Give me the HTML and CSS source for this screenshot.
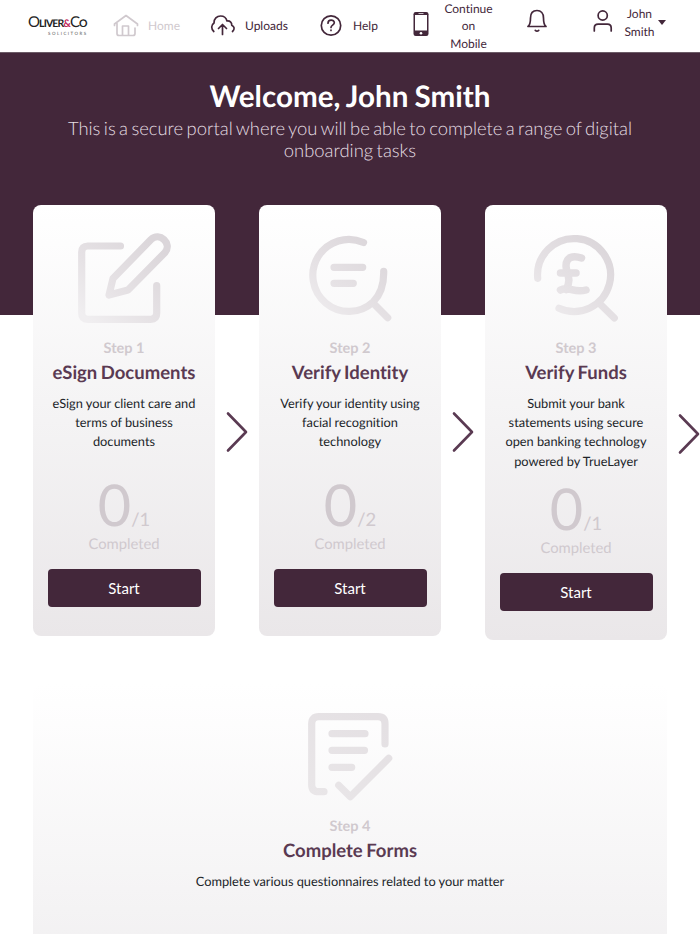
FILE: index.html
```html
<!DOCTYPE html>
<html lang="en">
<head>
    <meta charset="UTF-8">
    <meta name="viewport" content="width=device-width, initial-scale=1.0">
    <title>Oliver&amp;Co Solicitors</title>
    <link rel="stylesheet" href="styles.css">
</head>
<body>
    <nav class="navbar">
        <a class="logo">
            <span class="logo-name">O<small>LIVER</small><em>&amp;</em>C<small>O</small></span>
            <span class="logo-sub">SOLICITORS</span>
        </a>
        <a class="nav-item nav-home active">
            <svg width="26" height="24" viewBox="0 0 26 24"><path d="M1.500 11.500V10L13 1.500 24.500 10v1.500M4 9.500v10q0 2 2 2h3.500v-9.500h6v9.500M9.500 21.500H20q2 0 2-2V14"/></svg>
            <span>Home</span>
        </a>
        <a class="nav-item nav-uploads">
            <svg width="26" height="24" viewBox="0 0 26 24"><path d="M3.800 17.500C1 15 1 11 4 9 3.800 4.500 7 2 10.500 2c3.500 0 5.800 2 6.500 5 3.300-.3 5 1.700 4.700 4.200 2.800 1.300 3.300 4 .8 6.300M12.500 20.500V11M8.500 14.500l4-4 4 4"/></svg>
            <span>Uploads</span>
        </a>
        <a class="nav-item nav-help">
            <svg width="22" height="24" viewBox="0 0 22 24"><circle cx="11" cy="11.500" r="9.700"/><path d="M8 9.200c0-4.200 6.300-4 6.300-.5 0 2.500-3.300 2.300-3.300 4.800M11 16.200v.3"/></svg>
            <span>Help</span>
        </a>
        <a class="nav-item nav-mobile">
            <svg width="16" height="24" viewBox="0 0 16 24"><rect class="fill" x=".5" y="0" width="15" height="24" rx="2.200"/><path class="light" d="M2 3h12v15.500H2z"/><circle class="light" cx="8" cy="21.200" r="1.300"/><path class="light" d="M5.500 1.200h5v.7h-5z"/></svg>
            <span>Continue on Mobile</span>
        </a>
        <a class="nav-item nav-bell">
            <svg width="20" height="24" viewBox="0 0 20 24"><path d="M1 17.500h18c-2-1.500-2.500-3-2.500-8.500 0-4.800-2.500-7.500-6.500-7.500S3.500 4.200 3.500 9c0 5.500-.5 7-2.500 8.500zM8.300 21.300q1.700 1.800 3.400 0"/></svg>
        </a>
        <a class="nav-item nav-user">
            <svg width="20" height="24" viewBox="0 0 20 24"><circle cx="9.700" cy="6.500" r="4.600"/><path d="M1.300 22v-3q0-3.800 3.800-3.800h9.300q3.800 0 3.800 3.800v3"/></svg>
            <span>John Smith</span>
            <i class="caret"></i>
        </a>
    </nav>

    <header class="hero">
        <h1>Welcome, John Smith</h1>
        <p>This is a secure portal where you will be able to complete a range of digital onboarding tasks</p>
    </header>

    <svg class="defs" width="0" height="0">
        <linearGradient id="fade" gradientUnits="userSpaceOnUse" x1="15" y1="92" x2="80" y2="15">
            <stop offset="0" stop-color="#f0eef0"/>
            <stop offset=".4" stop-color="#e6e2e5"/>
            <stop offset="1" stop-color="#dbd6da"/>
        </linearGradient>
        <linearGradient id="soft" gradientUnits="userSpaceOnUse" x1="15" y1="92" x2="80" y2="15">
            <stop offset="0" stop-color="#e9e6e8"/>
            <stop offset="1" stop-color="#e4e0e3"/>
        </linearGradient>
    </svg>

    <main class="steps">
        <div class="step">
            <div class="card">
                <svg class="step-icon" viewBox="0 0 100 100"><path d="M46.500 18H13.700q-6 0-6 6v61.300q0 6 6 6h63q6 0 6-6V57.700M35 67l4-16.500L77 11.500C85.500 3.500 98.500 15.500 91 24.500L54 62z"/></svg>
                <h4>Step 1</h4>
                <h3>eSign Documents</h3>
                <p class="desc">eSign your client care and terms of business documents</p>
                <div class="count"><b>0</b>/1</div>
                <div class="completed">Completed</div>
                <button class="start-btn">Start</button>
            </div>
            <svg class="arrow" viewBox="0 0 24 44"><path d="M3 3.500 21 22 3 40.500"/></svg>
        </div>

        <div class="step">
            <div class="card">
                <svg class="step-icon" viewBox="0 0 100 100"><path d="M63.500 14.500A36 36 0 1 0 73.300 73.800C80.500 66.500 84 56 83.700 43.300M73.300 75.300l14.400 14.400M34 39.300h28.700M34 55.300h19.300"/></svg>
                <h4>Step 2</h4>
                <h3>Verify Identity</h3>
                <p class="desc">Verify your identity using facial recognition technology</p>
                <div class="count"><b>0</b>/2</div>
                <div class="completed">Completed</div>
                <button class="start-btn">Start</button>
            </div>
            <svg class="arrow" viewBox="0 0 24 44"><path d="M3 3.500 21 22 3 40.500"/></svg>
        </div>

        <div class="step">
            <div class="card tall">
                <svg class="step-icon" viewBox="0 0 100 100"><path d="M11.700 50.300A36.500 36.500 0 1 1 33 80.300M73.300 75.300 88.300 90"/><path class="pound" d="M55.500 30C47 27 40 29 40 38c0 7 6.500 13 0 23.500M34.500 45H50M34.500 62c8-4.500 13 3.500 25.500 0"/></svg>
                <h4>Step 3</h4>
                <h3>Verify Funds</h3>
                <p class="desc">Submit your bank statements using secure open banking technology powered by TrueLayer</p>
                <div class="count"><b>0</b>/1</div>
                <div class="completed">Completed</div>
                <button class="start-btn">Start</button>
            </div>
            <svg class="arrow" viewBox="0 0 24 44"><path d="M3 3.500 21 22 3 40.500"/></svg>
        </div>
    </main>

    <section class="card card-wide">
        <svg class="step-icon soft" viewBox="0 0 100 100"><path d="M24 84.700h-5.300q-7 0-7-7v-61q0-7 7-7H78q7 0 7 7V37M32 26.700h33M32 43.300h32.500M32 60.300h19.700M38.700 78.300l11.600 11.400 38.400-38.400"/></svg>
        <h4>Step 4</h4>
        <h3>Complete Forms</h3>
        <p class="desc">Complete various questionnaires related to your matter</p>
    </section>
</body>
</html>
```
FILE: styles.css
```css
* {
    margin: 0;
    padding: 0;
    box-sizing: border-box;
}

html {
    overflow: hidden;
}

body {
    height: 934px;
    overflow: hidden;
    font-family: Lato, sans-serif;
    font-variant-ligatures: none;
    text-rendering: geometricPrecision;
    color: #212529;
    background-color: #fff;
}

/* Navbar */
.navbar {
    display: flex;
    align-items: center;
    height: 52px;
    padding-left: 28px;
    background-color: #fff;
}

.logo {
    display: flex;
    flex-direction: column;
    width: 60px;
    color: #222;
    white-space: nowrap;
}

.logo-name {
    font-size: 15px;
    line-height: 13px;
    letter-spacing: -0.9px;
}

.logo-name small {
    font-size: 10.5px;
    font-weight: bold;
}

.logo-name em {
    font-size: 10.5px;
    font-style: normal;
    font-weight: bold;
    color: #c2285a;
}

.logo-sub {
    padding-left: 20px;
    font-size: 4.4px;
    line-height: 5px;
    letter-spacing: 1.5px;
    color: #555;
}

.nav-item {
    display: flex;
    align-items: center;
    font-size: 12px;
    line-height: 17.3px;
    text-align: center;
    color: #43273a;
}

.nav-item svg {
    flex: none;
    margin: -1px 9px 0 0;
    fill: none;
    stroke: #43273a;
    stroke-width: 1.7;
    stroke-linecap: round;
    stroke-linejoin: round;
}

.nav-item .fill {
    fill: #43273a;
    stroke: none;
}

.nav-item .light {
    fill: #fff;
    stroke: none;
}

.nav-home {
    width: 97px;
    margin-left: 25px;
}

.nav-home.active {
    color: #d0c9ce;
}

.nav-home.active svg {
    stroke: #d0c9ce;
}

.nav-uploads {
    width: 110px;
}

.nav-help {
    width: 93px;
}

.nav-help svg {
    margin-right: 11px;
}

.nav-mobile {
    width: 114px;
}

.nav-mobile svg {
    margin: -3px 13px 0 0;
}

.nav-mobile span {
    width: 53px;
}

.nav-bell {
    width: 66px;
}

.nav-bell svg,
.nav-user svg {
    margin-top: -11px;
}

.nav-user span {
    width: 35px;
    margin-top: -7px;
}

.caret {
    margin: -8px 0 0 1px;
    border: 4px solid transparent;
    border-top: 5px solid #43273a;
    border-bottom: 0;
}

/* Hero */
.hero {
    height: 263px;
    padding: 25px 50px 0;
    text-align: center;
    color: #fff;
    background-color: #43273a;
    border-top: 1px solid #6b5b66;
}

.hero h1 {
    font-size: 29.6px;
    line-height: 38px;
    word-spacing: -1px;
}

.hero p {
    padding-top: 1px;
    font-size: 18.4px;
    font-weight: 300;
    line-height: 22px;
    word-spacing: -1.6px;
    color: #e6dfe4;
}

.defs {
    display: block;
}

/* Steps */
.steps {
    display: flex;
    align-items: flex-start;
    margin-top: -110px;
    padding-left: 33px;
}

.step {
    display: flex;
    flex: none;
    align-items: center;
    width: 226px;
}

.card {
    display: flex;
    flex-direction: column;
    align-items: center;
    flex: none;
    width: 182px;
    height: 431px;
    padding: 23px 14.5px 0;
    text-align: center;
    background: linear-gradient(#fff, #f4f3f4 50%, #eae7e9);
    border-radius: 8px;
}

.card.tall {
    height: 435px;
}

.step-icon {
    flex: none;
    width: 100px;
    height: 100px;
    fill: none;
    stroke: url(#fade);
    stroke-width: 7.2;
    stroke-linecap: round;
    stroke-linejoin: round;
}

.step-icon.soft {
    stroke: url(#soft);
}

.step-icon .pound {
    stroke-width: 7.5;
}

.card h4 {
    padding-top: 11px;
    font-size: 14.5px;
    line-height: 20px;
    color: #d0c9ce;
}

.card h3 {
    font-size: 18.5px;
    line-height: 27px;
    word-spacing: -1px;
    color: #5a3a52;
    white-space: nowrap;
}

.desc {
    flex: none;
    height: 58px;
    margin-top: 8px;
    font-size: 12.8px;
    line-height: 19.2px;
    word-spacing: -0.1px;
}

.tall .desc {
    height: 77px;
}

/* big done number, small total */
.count {
    flex: none;
    height: 56px;
    margin-top: 26px;
    font-size: 18.4px;
    line-height: 20px;
    color: #d0c9ce;
}

.tall .count {
    margin-top: 11px;
}

.count b {
    font-size: 57.6px;
    font-weight: 400;
    line-height: 54px;
}

.completed {
    font-size: 14.8px;
    line-height: 20px;
    color: #d0c9ce;
}

.start-btn {
    flex: none;
    width: 100%;
    height: 38px;
    margin-top: 15px;
    font-family: inherit;
    font-size: 15px;
    color: #fff;
    background-color: #43273a;
    border: none;
    border-radius: 4px;
    cursor: pointer;
}

.arrow {
    flex: none;
    width: 24px;
    height: 44px;
    margin: 22px 0 0 10px;
    fill: none;
    stroke: #5a3a52;
    stroke-width: 2.6;
    stroke-linecap: round;
    stroke-linejoin: round;
}

.card-wide {
    width: 634px;
    height: 410px;
    margin: 44px 0 0 33px;
    background: linear-gradient(#fff, #f5f4f5 50%, #ebe9eb);
}

.card-wide h4 {
    padding-top: 10px;
}
```
